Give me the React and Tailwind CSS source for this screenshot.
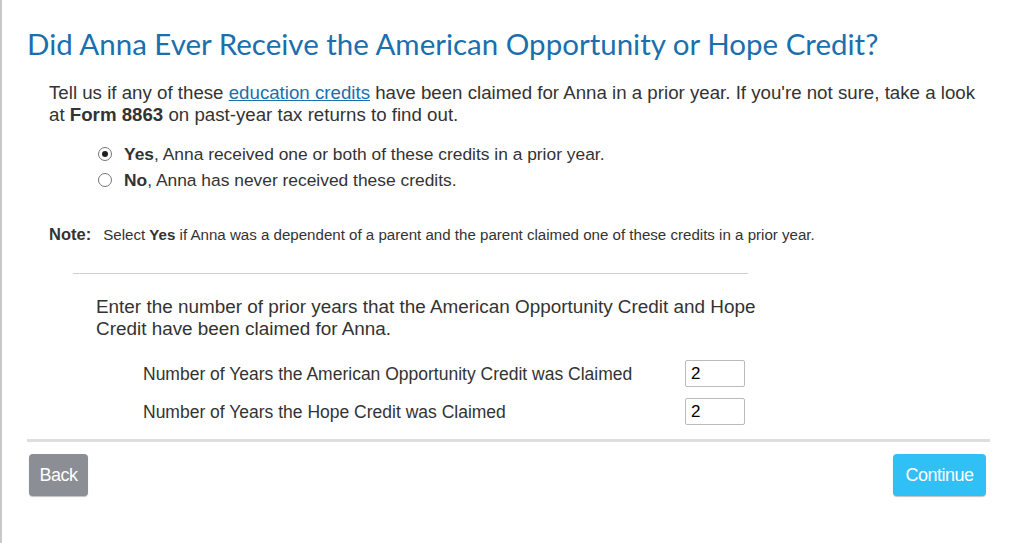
import React from "react";

function Radio({ checked }) {
  return (
    <span className="relative inline-flex w-[14px] h-[14px] rounded-full border border-[#777] bg-white shrink-0 items-center justify-center">
      {checked && <span className="w-[6px] h-[6px] rounded-full bg-[#222]" />}
    </span>
  );
}

export default function App() {
  return (
    <div className="w-[1027px] h-[543px] bg-white border-l-2 border-[#c8c8c8] relative overflow-hidden" style={{ fontFamily: '"Liberation Sans", Arial, sans-serif' }}>
      <div className="absolute -left-[2px] top-[210px] w-[2px] h-[9px] bg-[#555]" />
      <div className="pl-[25px] pr-[35px] pt-[28px]">
        <h1 className="text-[29.5px] leading-[32px] text-[#1a6fae]" style={{ fontFamily: 'Lato, "Open Sans", sans-serif' }}>
          Did Anna Ever Receive the American Opportunity or Hope Credit?
        </h1>
        <div className="pl-[22px] mt-[22px] text-[18.7px] leading-[22px] text-[#333] w-[960px]">
          <p>
            <span>Tell us if any of these </span>
            <a className="text-[#1a6fae] underline">education credits</a>
            <span> have been claimed for Anna in a prior year. If you're not sure, take a look</span>
            <span> at </span>
            <b>Form 8863</b>
            <span> on past-year tax returns to find out.</span>
          </p>
          <div className="pl-[49px] mt-[18px] flex flex-col gap-[6px] text-[17.4px] leading-[20px]">
            <label className="flex items-center gap-[12px]"><Radio checked /><span><b>Yes</b>, Anna received one or both of these credits in a prior year.</span></label>
            <label className="flex items-center gap-[12px]"><Radio /><span><b>No</b>, Anna has never received these credits.</span></label>
          </div>
          <div className="mt-[34px] flex items-baseline gap-[12px] leading-[20px]">
            <span className="font-bold text-[16.5px]">Note:</span>
            <span className="text-[15.1px]">Select <b>Yes</b> if Anna was a dependent of a parent and the parent claimed one of these credits in a prior year.</span>
          </div>
          <div className="ml-[24px] w-[675px] mt-[28px] border-t border-[#cfcfcf]" />
          <div className="pl-[47px] mt-[22px] w-[730px]">
            <p className="text-[18.9px] leading-[22px] w-[665px]">Enter the number of prior years that the American Opportunity Credit and Hope Credit have been claimed for Anna.</p>
            <div className="pl-[47px] mt-[20px] flex flex-col gap-[11px] text-[17.5px]">
              <div className="flex items-center">
                <span className="w-[542px]">Number of Years the American Opportunity Credit was Claimed</span>
                <input readOnly value="2" className="w-[60px] h-[27px] border border-[#bbb] rounded-[2px] px-[5px] text-[17px] text-black outline-none" />
              </div>
              <div className="flex items-center">
                <span className="w-[542px]">Number of Years the Hope Credit was Claimed</span>
                <input readOnly value="2" className="w-[60px] h-[27px] border border-[#bbb] rounded-[2px] px-[5px] text-[17px] text-black outline-none" />
              </div>
            </div>
          </div>
        </div>
        <div className="mt-[14px] h-[3px] bg-[#dedede] w-[963px]" />
        <div className="mt-[12px] flex justify-between w-[957px] ml-[2px]">
          <button className="h-[42px] w-[59px] rounded-[4px] bg-[#8b8e94] text-white text-[18px] tracking-[-0.5px] shadow-[0_1px_1px_rgba(0,0,0,0.25)]">Back</button>
          <button className="h-[42px] w-[93px] rounded-[4px] bg-[#30c0f5] text-white text-[18px] tracking-[-0.5px] shadow-[0_1px_1px_rgba(0,0,0,0.25)]">Continue</button>
        </div>
      </div>
    </div>
  );
}
